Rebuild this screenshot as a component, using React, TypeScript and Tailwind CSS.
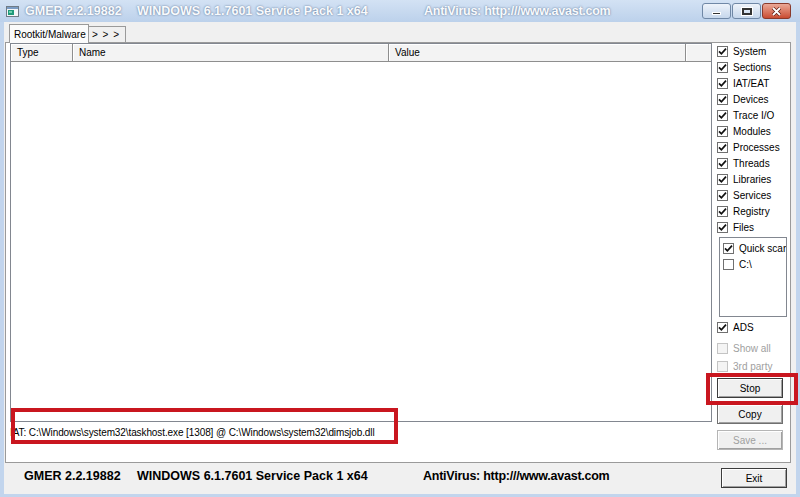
import React from 'react';

const scanItems = [
  'System',
  'Sections',
  'IAT/EAT',
  'Devices',
  'Trace I/O',
  'Modules',
  'Processes',
  'Threads',
  'Libraries',
  'Services',
  'Registry',
  'Files'
];

function CheckBox({ checked, disabled }: { checked?: boolean; disabled?: boolean }) {
  return (
    <span
      className={`flex h-[11px] w-[11px] shrink-0 items-center justify-center border ${
        disabled ? 'border-[#c4c4c4] bg-[#f4f4f4]' : 'border-[#707070] bg-white'
      }`}
    >
      {checked && (
        <svg width="9" height="9" viewBox="0 0 9 9">
          <path d="M1 4.3 L3.4 6.8 L8 1.6" fill="none" stroke="#111" strokeWidth="1.7" />
        </svg>
      )}
    </span>
  );
}

function CheckRow({
  label,
  checked,
  disabled,
  className = ''
}: {
  label: string;
  checked?: boolean;
  disabled?: boolean;
  className?: string;
}) {
  return (
    <div className={`flex h-[16px] items-center gap-[5px] ${className}`}>
      <CheckBox checked={checked} disabled={disabled} />
      <span className={`whitespace-nowrap text-[10px] ${disabled ? 'text-[#a0a0a0]' : 'text-black'}`}>{label}</span>
    </div>
  );
}

function Button({ label, disabled, strong }: { label: string; disabled?: boolean; strong?: boolean }) {
  return (
    <div
      className={`flex h-[20px] w-[66px] items-center justify-center border bg-[#f0f0f0] text-[10px] shadow-[inset_1px_1px_0_#fff,inset_-1px_-1px_0_#a0a0a0] ${
        strong ? 'border-[#3c3c3c]' : 'border-[#707070]'
      } ${disabled ? 'text-[#a0a0a0] border-[#b5b5b5]' : 'text-black'}`}
    >
      {label}
    </div>
  );
}

function AppIcon() {
  return (
    <svg width="13" height="11" viewBox="0 0 13 11">
      <rect x="0.5" y="0.5" width="12" height="10" fill="#f4f6f8" stroke="#6f7b86" />
      <rect x="1" y="1" width="11" height="2" fill="#7a9cc4" />
      <rect x="2" y="4" width="6" height="5" fill="#1f9a7a" />
      <rect x="3" y="5" width="3" height="2" fill="#6fd0b0" />
    </svg>
  );
}

function TitleBar() {
  return (
    <div className="flex h-[22px] items-center bg-gradient-to-b from-[#d3e2f4] to-[#bcd1eb] pl-[6px]">
      <AppIcon />
      <div className="ml-[6px] flex text-[12.5px] font-bold text-[#f8fafd] [text-shadow:0_0_2px_rgba(60,85,120,0.85)]">
        <span className="w-[112px]">GMER 2.2.19882</span>
        <span className="w-[287px]">WINDOWS 6.1.7601 Service Pack 1 x64</span>
        <span className="tracking-[-0.25px]">AntiVirus: http:///www.avast.com</span>
      </div>
      <div className="ml-auto mr-[9px] flex gap-px self-start pt-[3px]">
        <div className="flex h-[16px] w-[29px] items-end justify-center rounded-[3px] border border-[#7088a6] bg-gradient-to-b from-[#eef3fa] to-[#c6d7ec] pb-[3px]">
          <span className="h-[3px] w-[9px] border border-[#fff] bg-[#333]" />
        </div>
        <div className="flex h-[16px] w-[29px] items-center justify-center rounded-[3px] border border-[#7088a6] bg-gradient-to-b from-[#eef3fa] to-[#c6d7ec]">
          <span className="h-[7px] w-[10px] border-2 border-[#333] shadow-[0_0_0_1px_#fff]" />
        </div>
        <div className="flex h-[16px] w-[29px] items-center justify-center rounded-[3px] border border-[#8a3a2c] bg-gradient-to-b from-[#eaa897] to-[#c94b31]">
          <svg width="11" height="9" viewBox="0 0 11 9">
            <path d="M2 1 L9 8 M9 1 L2 8" stroke="#5a1a10" strokeWidth="3.2" />
            <path d="M2 1 L9 8 M9 1 L2 8" stroke="#fff" strokeWidth="1.8" />
          </svg>
        </div>
      </div>
    </div>
  );
}

function ListView() {
  return (
    <div className="flex h-[379px] flex-col border border-[#828790] bg-white">
      <div className="flex h-[18px] text-[10px] text-black">
        <div className="flex w-[62px] items-center border-r border-b border-[#8e8e8e] bg-[#f3f3f3] pl-[6px] shadow-[inset_1px_1px_0_#fff]">
          Type
        </div>
        <div className="flex w-[316px] items-center border-r border-b border-[#8e8e8e] bg-[#f3f3f3] pl-[6px] shadow-[inset_1px_1px_0_#fff]">
          Name
        </div>
        <div className="flex w-[297px] items-center border-r border-b border-[#8e8e8e] bg-[#f3f3f3] pl-[6px] shadow-[inset_1px_1px_0_#fff]">
          Value
        </div>
        <div className="flex-1 border-b border-[#8e8e8e] bg-[#f3f3f3] shadow-[inset_1px_1px_0_#fff]" />
      </div>
      <div className="flex-1" />
    </div>
  );
}

export default function App() {
  return (
    <div className="relative flex h-[497px] w-[800px] flex-col overflow-hidden bg-[#c2d5ed] font-['Liberation_Sans',Arial,sans-serif]">
      <TitleBar />

      <div className="mx-[4px] mb-[3px] flex flex-1 flex-col bg-[#f0f0f0]">
        {/* tabs */}
        <div className="relative z-10 flex h-[20px] items-end pl-[5px]">
          <div className="-mb-px flex h-[19px] w-[80px] items-center border border-b-0 border-[#9a9a9a] bg-[#fbfbfb] pl-[4px] text-[10px] text-black">
            Rootkit/Malware
          </div>
          <div className="flex h-[16px] w-[37px] items-center border border-l-0 border-b-0 border-[#9a9a9a] bg-[#f0f0f0] pl-[3px] text-[10px] tracking-[1px] text-black">
            &gt; &gt; &gt;
          </div>
        </div>

        {/* tab panel */}
        <div className="ml-px mr-[5px] flex h-[421px] border border-[#9a9a9a] bg-white pl-[4px]">
          <div className="flex w-[702px] flex-col">
            <ListView />
            <div className="mt-[5px] whitespace-nowrap text-[10px] leading-[12px] tracking-[-0.1px] text-black">
              IAT: C:\Windows\system32\taskhost.exe [1308] @ C:\Windows\system32\dimsjob.dll
            </div>
          </div>

          <div className="flex flex-1 flex-col pl-[5px]">
            {scanItems.map((item) => (
              <CheckRow key={item} label={item} checked />
            ))}
            <div className="ml-[2px] mt-[2px] flex h-[80px] w-[68px] flex-col overflow-hidden border border-[#828790] bg-white pl-[3px] pt-[2px]">
              <CheckRow label="Quick scan" checked />
              <CheckRow label="C:\" />
            </div>
            <CheckRow label="ADS" checked className="mt-[2px]" />
            <CheckRow label="Show all" disabled className="mt-[5px]" />
            <CheckRow label="3rd party" disabled className="mt-[2px]" />
            <div className="mt-[4px]">
              <Button label="Stop" strong />
            </div>
            <div className="mt-[6px]">
              <Button label="Copy" />
            </div>
            <div className="mt-[6px]">
              <Button label="Save ..." disabled />
            </div>
          </div>
        </div>

        {/* status bar */}
        <div className="flex flex-1 items-start pl-[20px] pt-[5px]">
          <div className="mt-[1px] flex text-[12.5px] font-bold leading-[14px] text-black">
            <span className="w-[113px]">GMER 2.2.19882</span>
            <span className="w-[286px]">WINDOWS 6.1.7601 Service Pack 1 x64</span>
            <span className="tracking-[-0.25px]">AntiVirus: http:///www.avast.com</span>
          </div>
          <div className="ml-auto mr-[9px]">
            <Button label="Exit" strong />
          </div>
        </div>
      </div>

      {/* annotation overlays */}
      <div className="pointer-events-none absolute left-[11px] top-[408px] h-[36px] w-[387px] border-4 border-[#c9161f]" />
      <div className="pointer-events-none absolute left-[706px] top-[373px] h-[32px] w-[92px] border-4 border-[#c9161f]" />
    </div>
  );
}
